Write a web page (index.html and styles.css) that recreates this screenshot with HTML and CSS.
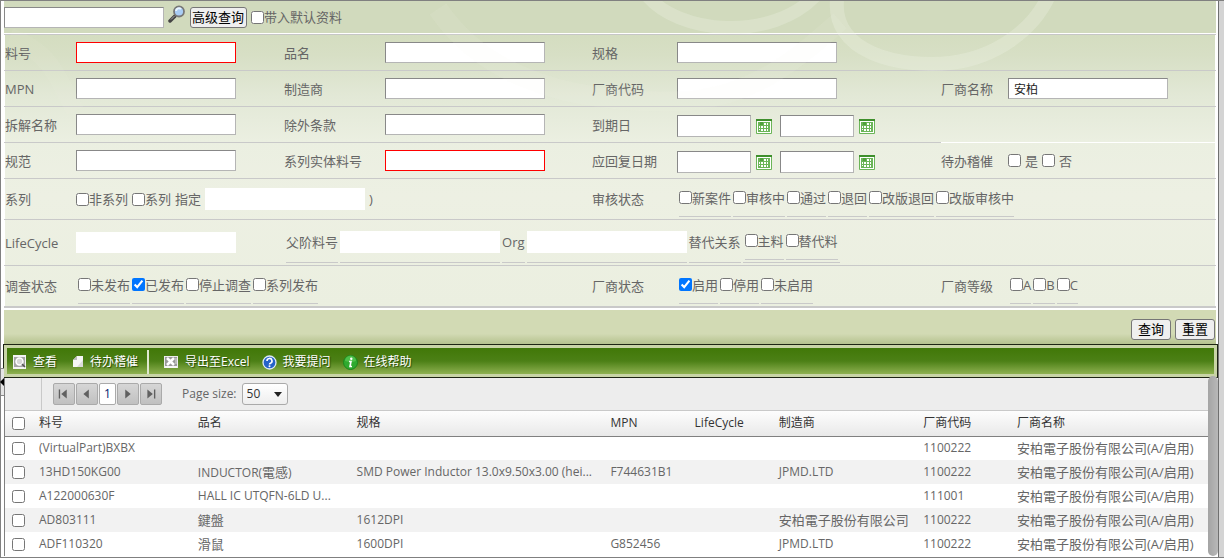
FILE: index.html
```html
<!DOCTYPE html>
<html lang="zh-CN">
<head>
<meta charset="utf-8">
<title>料号查询</title>
<link rel="stylesheet" href="styles.css">
</head>
<body>
<svg class="defs" width="0" height="0" aria-hidden="true">
  <symbol id="cal" viewBox="0 0 16 15">
    <rect x="0" y="0" width="16" height="15" rx="1" fill="#6bb558"/>
    <rect x="0" y="0" width="16" height="2" fill="#3e8f2c"/>
    <rect x="1" y="2" width="14" height="12" fill="#fff"/>
    <rect x="2" y="3" width="12" height="10" fill="#6bb558"/>
    <path d="M5 4h2v2H5zM8 4h2v2H8zM11 4h1v2h-1zM3 7h1v2H3zM5 7h2v2H5zM8 7h2v2H8zM11 7h1v2h-1zM3 10h1v1H3zM5 10h2v2H5zM8 10h2v2H8zM11 10h1v2h-1z" fill="#fff"/>
    <path d="M4 3h3v3H4z" fill="#4fa13c"/>
  </symbol>
</svg>
<div class="frame">
  <main class="page">
    <svg class="swirl" viewBox="0 0 1212 178" preserveAspectRatio="xMidYMin slice" aria-hidden="true">
      <g fill="none" stroke="#f2f7ea">
        <path d="M641 -8C672 34 770 42 814 -8" stroke-width="13" opacity=".26"/>
        <path d="M834 -8C822 54 900 67 946 62C990 57 1030 30 1046 -8" stroke-width="14" opacity=".26"/>
        <path d="M434 8C476 70 556 105 686 100C756 92 796 55 836 20" stroke-width="20" opacity=".1"/>
        <path d="M6 36C46 50 56 80 71 110" stroke-width="18" opacity=".08"/>
      </g>
    </svg>
    <form class="search">
      <div class="quick">
        <input class="box" type="text" aria-label="快速查询">
        <button class="lens" type="button" aria-label="查询">
          <svg width="18" height="18" viewBox="0 0 18 18"><path d="M7 11L2 16" stroke="#444" stroke-width="3.500" stroke-linecap="round"/><path d="M6.500 11L3 14.500" stroke="#aaa" stroke-width="1"/><circle cx="11" cy="6.500" r="5" fill="#a9cdf5" stroke="#777" stroke-width="1.800"/><path d="M8 6a3 3 0 0 1 5-2" stroke="#eaf4ff" stroke-width="2" fill="none"/></svg>
        </button>
        <button class="btn advanced" type="button">高级查询</button>
        <label class="check"><input type="checkbox">带入默认资料</label>
      </div>

      <div class="fields">
        <label class="cell name first" for="f1">料号</label><div class="cell"><input class="box req" id="f1" type="text"></div>
        <label class="cell name" for="f2">品名</label><div class="cell"><input class="box" id="f2" type="text"></div>
        <label class="cell name" for="f3">规格</label><div class="cell"><input class="box" id="f3" type="text"></div>
        <div class="cell rest"></div>

        <label class="cell name first" for="f4">MPN</label><div class="cell"><input class="box" id="f4" type="text"></div>
        <label class="cell name" for="f5">制造商</label><div class="cell"><input class="box" id="f5" type="text"></div>
        <label class="cell name" for="f6">厂商代码</label><div class="cell"><input class="box" id="f6" type="text"></div>
        <label class="cell name" for="f7">厂商名称</label><div class="cell"><input class="box" id="f7" type="text" value="安柏"></div>

        <label class="cell name first" for="f8">拆解名称</label><div class="cell"><input class="box" id="f8" type="text"></div>
        <label class="cell name" for="f9">除外条款</label><div class="cell"><input class="box" id="f9" type="text"></div>
        <label class="cell name" for="f10">到期日</label>
        <div class="cell dates">
          <input class="box date" id="f10" type="text"><button class="cal" type="button" aria-label="选择日期"><svg><use href="#cal"/></svg></button>
          <input class="box date" type="text" aria-label="到期日至"><button class="cal" type="button" aria-label="选择日期"><svg><use href="#cal"/></svg></button>
        </div>
        <div class="cell rest pale"></div>

        <label class="cell name first" for="f11">规范</label><div class="cell"><input class="box" id="f11" type="text"></div>
        <label class="cell name" for="f12">系列实体料号</label><div class="cell"><input class="box req" id="f12" type="text"></div>
        <label class="cell name" for="f13">应回复日期</label>
        <div class="cell dates">
          <input class="box date" id="f13" type="text"><button class="cal" type="button" aria-label="选择日期"><svg><use href="#cal"/></svg></button>
          <input class="box date" type="text" aria-label="应回复日期至"><button class="cal" type="button" aria-label="选择日期"><svg><use href="#cal"/></svg></button>
        </div>
        <div class="cell name">待办稽催</div>
        <div class="cell yesno"><label class="check"><input type="checkbox">是</label><label class="check"><input type="checkbox">否</label></div>

        <div class="cell name first r5">系列</div>
        <div class="cell span3 series">
          <label class="check"><input type="checkbox">非系列</label><label class="check"><input type="checkbox">系列</label>
          <label for="f14">指定</label><input class="box plain" id="f14" type="text"><span>)</span>
        </div>
        <div class="cell name">审核状态</div>
        <div class="cell span3 lined">
          <label class="check"><input type="checkbox">新案件</label><label class="check"><input type="checkbox">审核中</label><label class="check"><input type="checkbox">通过</label><label class="check"><input type="checkbox">退回</label><label class="check"><input type="checkbox">改版退回</label><label class="check"><input type="checkbox">改版审核中</label>
        </div>

        <label class="cell name first r6" for="f15">LifeCycle</label><div class="cell"><input class="box bare" id="f15" type="text"></div>
        <div class="cell span6 parts">
          <label class="part" for="f16">父阶料号</label>
          <div class="part"><input class="box plain" id="f16" type="text"></div>
          <label class="part" for="f17">Org</label>
          <div class="part"><input class="box plain" id="f17" type="text"></div>
          <span class="part">替代关系</span>
          <div class="part lined"><label class="check"><input type="checkbox">主料</label><label class="check"><input type="checkbox">替代料</label></div>
        </div>

        <div class="cell name first r7">调查状态</div>
        <div class="cell lined r7">
          <label class="check"><input type="checkbox">未发布</label><label class="check"><input type="checkbox" checked>已发布</label><label class="check"><input type="checkbox">停止调查</label><label class="check"><input type="checkbox">系列发布</label>
        </div>
        <div class="cell r7"></div><div class="cell r7"></div>
        <div class="cell name r7">厂商状态</div>
        <div class="cell lined r7">
          <label class="check"><input type="checkbox" checked>启用</label><label class="check"><input type="checkbox">停用</label><label class="check"><input type="checkbox">未启用</label>
        </div>
        <div class="cell name r7">厂商等级</div>
        <div class="cell lined r7">
          <label class="check"><input type="checkbox">A</label><label class="check"><input type="checkbox">B</label><label class="check"><input type="checkbox">C</label>
        </div>
      </div>

      <div class="actions"><button class="btn" type="submit">查询</button><button class="btn" type="reset">重置</button></div>
    </form>

    <nav class="toolbar">
      <button type="button" class="tool"><svg width="14" height="14" viewBox="0 0 14 14"><rect width="13" height="14" fill="#f4f4f4"/><rect x="1" y="2" width="11" height="10" fill="#a5a5a5"/><circle cx="6.500" cy="6.500" r="3.500" fill="#d8d8d8" stroke="#fff" stroke-width="1.500"/><path d="M9 9l3 3" stroke="#555" stroke-width="1.500"/></svg>查看</button>
      <button type="button" class="tool"><svg width="12" height="14" viewBox="0 0 12 14"><path d="M1 5L5 1h6v11H1z" fill="#f6f6f6"/><path d="M1 5h4V1z" fill="#bcbcbc"/><path d="M5 12l6-7v7z" fill="#dcdcdc"/></svg>待办稽催</button>
      <span class="bar"></span>
      <button type="button" class="tool"><svg width="15" height="14" viewBox="0 0 15 14"><path d="M0 1h14v12H0z" fill="#ededed"/><path d="M1 2h12v9H1z" fill="#999"/><path d="M3 3l7 7M10 3L3 10" stroke="#fff" stroke-width="2.500"/><path d="M11 4h2M11 6h2M11 8h2" stroke="#ddd"/><path d="M1 12h12" stroke="#fff"/></svg>导出至Excel</button>
      <button type="button" class="tool"><svg width="15" height="15" viewBox="0 0 15 15"><circle cx="7.500" cy="7.500" r="6.500" fill="#2563c9" stroke="#dce8f8" stroke-width="1.300"/><path d="M5 6a2.500 2.500 0 1 1 3.500 2.200q-1 .4-1 1.300" fill="none" stroke="#fff" stroke-width="1.600"/><circle cx="7.500" cy="11.300" r="1" fill="#fff"/></svg>我要提问</button>
      <button type="button" class="tool"><svg width="15" height="15" viewBox="0 0 15 15"><circle cx="7.500" cy="7.500" r="7" fill="#2faa2f" stroke="#1d861d"/><path d="M2 6a5.500 5.500 0 0 1 11 0q-5 2-11 0" fill="#62cf5e" opacity=".6"/><circle cx="8.300" cy="3.700" r="1.200" fill="#fff"/><path d="M6 6.500h2l-1 5h2" fill="none" stroke="#fff" stroke-width="1.600"/></svg>在线帮助</button>
    </nav>

    <section class="grid">
      <div class="list">
        <div class="pager">
          <div class="pages">
            <button type="button" aria-label="第一页"><svg viewBox="0 0 22 22"><path d="M6 6v10" stroke="#606060" stroke-width="1.500"/><path d="M14 6v10l-6-5z" fill="#606060"/></svg></button>
            <button type="button" aria-label="上一页"><svg viewBox="0 0 22 22"><path d="M13 6v10l-6-5z" fill="#606060"/></svg></button>
            <button type="button" class="current">1</button>
            <button type="button" aria-label="下一页"><svg viewBox="0 0 22 22"><path d="M8 6v10l6-5z" fill="#606060"/></svg></button>
            <button type="button" aria-label="最后一页"><svg viewBox="0 0 22 22"><path d="M15 6v10" stroke="#606060" stroke-width="1.500"/><path d="M7 6v10l6-5z" fill="#606060"/></svg></button>
          </div>
          <label for="size">Page size:</label>
          <select id="size"><option>50</option></select>
        </div>
        <table>
          <colgroup><col class="w-check"><col class="w-part"><col class="w-part"><col class="w-spec"><col class="w-mpn"><col class="w-mpn"><col class="w-maker"><col class="w-code"><col class="w-vendor"></colgroup>
          <thead><tr><th><input type="checkbox" aria-label="全选"></th><th>料号</th><th>品名</th><th>规格</th><th>MPN</th><th>LifeCycle</th><th>制造商</th><th>厂商代码</th><th>厂商名称</th></tr></thead>
          <tbody>
            <tr><td><input type="checkbox" aria-label="选择"></td><td>(VirtualPart)BXBX</td><td></td><td></td><td></td><td></td><td></td><td>1100222</td><td class="zh">安柏電子股份有限公司(A/启用)</td></tr>
            <tr><td><input type="checkbox" aria-label="选择"></td><td>13HD150KG00</td><td>INDUCTOR(<span class="zh">電感</span>)</td><td>SMD Power Inductor 13.0x9.50x3.00 (hei...</td><td>F744631B1</td><td></td><td>JPMD.LTD</td><td>1100222</td><td class="zh">安柏電子股份有限公司(A/启用)</td></tr>
            <tr><td><input type="checkbox" aria-label="选择"></td><td>A122000630F</td><td>HALL IC UTQFN-6LD U...</td><td></td><td></td><td></td><td></td><td>111001</td><td class="zh">安柏電子股份有限公司(A/启用)</td></tr>
            <tr><td><input type="checkbox" aria-label="选择"></td><td>AD803111</td><td class="zh">鍵盤</td><td>1612DPI</td><td></td><td></td><td class="zh">安柏電子股份有限公司</td><td>1100222</td><td class="zh">安柏電子股份有限公司(A/启用)</td></tr>
            <tr><td><input type="checkbox" aria-label="选择"></td><td>ADF110320</td><td class="zh">滑鼠</td><td>1600DPI</td><td>G852456</td><td></td><td>JPMD.LTD</td><td>1100222</td><td class="zh">安柏電子股份有限公司(A/启用)</td></tr>
          </tbody>
        </table>
      </div>
      <div class="scroll"></div>
    </section>
    <div class="splitter"></div>
  </main>
</div>
</body>
</html>
```

FILE: styles.css
```css
* { box-sizing: border-box; }
body {
  margin: 0;
  background: #fff;
  color: #666;
  font: 13px/18px "Open Sans", "Noto Sans CJK SC", sans-serif;
}
input, button, select { font: inherit; margin: 0; }
input[type="checkbox"] { width: 13px; height: 13px; margin: 0; flex: none; }
button { cursor: pointer; }
.defs { position: absolute; }

.frame {
  min-height: 100vh;
  border: 1px solid #808080;
  border-right: 0;
  padding-right: 5px;
  background: #d4d4d4;
}
.page {
  position: relative;
  min-height: calc(100vh - 2px);
  padding: 0 2px 0 3px;
  border-right: 1px solid #707070;
  background: #fff;
}
.swirl {
  position: absolute;
  top: 0;
  left: 3px;
  width: calc(100% - 5px);
  height: 178px;
  pointer-events: none;
}

.quick {
  display: flex;
  align-items: center;
  height: 32px;
  background: #d1dabd;
}
.lens { margin: 0 4px; padding: 0; border: 0; background: none; display: flex; height: 24px; }
.check { display: flex; align-items: center; white-space: nowrap; }
.quick .check { margin-left: 4px; }
.box {
  width: 160px;
  height: 21px;
  padding: 0 5px;
  border: 1px solid #b5b5b5;
  border-top-color: #888;
  border-left-color: #888;
  border-radius: 0;
  background: #fff;
  color: #222;
  font-size: 12px;
}
.box:focus { outline: none; }
.box.req { border-color: red; }
.box.plain { height: 22px; border: 0; }
.box.bare { border: 0; }
.box.date { width: 74px; height: 22px; }
.btn {
  height: 21px;
  padding: 0 6px;
  border: 1px solid #767676;
  border-radius: 3px;
  background: #efefef;
  color: #000;
  line-height: 18px;
}
.advanced { padding: 0 2px 0 1px; }

.fields {
  display: grid;
  grid-template-columns: 72px 208fr 101px 207fr 85px 264fr 67px 208fr;
  border-top: 1px solid #c6c6c6;
  box-shadow: 0 -1px #fff;
  margin-top: 1px;
  background: linear-gradient(#d4ddc0, #d7dfc5 20px, #e2e8d6 60px, #ebefe1 106px, #edf0e3 160px, #ebefe0) center / calc(100% - 2px) 100% no-repeat #fff;
}
.cell {
  display: flex;
  align-items: center;
  min-width: 0;
  min-height: 36px;
  border-bottom: 1px solid #c9c9c9;
  white-space: nowrap;
}
.first { padding-left: 1px; }
.rest { grid-column: span 2; }
.pale { border-color: #fff; }
.span3 { grid-column: span 3; }
.span6 { grid-column: span 6; }
.r5 { min-height: 41px; }
.r6 { min-height: 46px; }
.r7 { min-height: 42px; border-bottom-width: 2px; }
.dates .cal { margin: 3px 8px 0 5px; }
.dates .box { margin-top: 3px; }
.cal { display: flex; padding: 0; border: 0; background: none; }
.cal svg { width: 16px; height: 15px; }
.yesno { gap: 4px; }
.yesno .check { gap: 4px; }
.series { gap: 4px; }
.lined { gap: 2px; padding-left: 2px; }
.lined .check { height: 36px; padding-bottom: 2px; border-bottom: 1px solid #c9c9c9; }
.parts { gap: 2px; padding-left: 2px; }
.part { display: flex; align-items: center; height: 41px; border-bottom: 1px solid #c9c9c9; }
.part.lined { align-items: flex-start; padding-top: 2px; padding-right: 2px; }

.actions {
  display: flex;
  justify-content: flex-end;
  align-items: center;
  gap: 4px;
  height: 36px;
  margin-top: 2px;
  padding: 4px 1px 0 0;
  border-bottom: 2px solid #d3dcb9;
  background: linear-gradient(#d2dab4 70%, #b5c28e);
}

.toolbar {
  position: relative;
  display: flex;
  align-items: center;
  height: 34px;
  margin: -2px -2px 0 -1px;
  padding: 2px 6px 0;
  border: 1px solid #1d2413;
  box-shadow: inset 0 0 0 3px #c8d4a6;
  background: linear-gradient(#417808 10%, #4c8016 50%, #8db04f 90%);
}
.tool {
  display: flex;
  align-items: center;
  gap: 6px;
  margin-right: 12px;
  padding: 0;
  border: 0;
  background: none;
  color: #fff;
  font-size: 12px;
  text-shadow: 1px 1px 1px #264806;
  white-space: nowrap;
}
.tool:first-child { margin: 0 15px 0 3px; }
.bar { width: 2px; height: 24px; margin: 0 15px 0 -3px; background: #dfe8cf; }

.grid { display: flex; margin-right: -2px; border-left: 1px solid #808080; }
.list { flex: 1; min-width: 0; }
.scroll { width: 10px; margin-top: -2px; border-radius: 5px; background: linear-gradient(90deg, #a4a4a4, #b8b8b8); z-index: 1; }
.pager {
  display: flex;
  align-items: center;
  height: 33px;
  border-bottom: 1px solid #c9c9c9;
  background: #ededed;
}
.pages {
  display: flex;
  align-items: center;
  gap: 1px;
  height: 100%;
  margin-left: 36px;
  padding-left: 11px;
  border-left: 1px solid #c9c9c9;
}
.pages button {
  display: flex;
  width: 22px;
  height: 22px;
  padding: 0;
  border: 1px solid #aaa;
  border-radius: 2px;
  background: linear-gradient(#d6d6d6, #c0c0c0);
}
.pages .current { width: 17px; justify-content: center; align-items: center; background: #fff; color: #00156e; font-size: 12px; }
.pager label { margin: 0 5px 0 20px; font-size: 12px; }
.pager select {
  width: 46px;
  height: 22px;
  padding: 0 4px;
  border: 1px solid #aaa;
  border-radius: 3px;
  color: #333;
  font-size: 12px;
  appearance: none;
  background: url("data:image/svg+xml,%3Csvg xmlns='http://www.w3.org/2000/svg' width='8' height='5'%3E%3Cpath d='M0 0h8L4 5z' fill='%23222'/%3E%3C/svg%3E") right 5px center no-repeat, linear-gradient(#fff, #eee);
}

table { width: 100%; border-collapse: collapse; table-layout: fixed; font-size: 12px; }
.w-check { width: 29px; }
.w-part { width: 13.2%; }
.w-spec { width: 21.1%; }
.w-mpn { width: 7%; }
.w-maker { width: 12%; }
.w-code { width: 7.8%; }
th, td { height: 24px; padding: 0 5px; text-align: left; font-weight: 400; white-space: nowrap; overflow: hidden; text-overflow: ellipsis; }
th { height: 25px; color: #333; border-bottom: 1px solid #808080; }
thead tr { background: linear-gradient(#fdfdfd, #e9e9e9); }
th:first-child, td:first-child { padding: 0 0 0 7px; }
th input, td input { display: block; }
tbody tr:nth-child(even) { background: #f2f2f2; }
.zh { font-size: 13px; }

.splitter {
  position: absolute;
  left: 0;
  top: 367px;
  width: 3px;
  height: 28px;
  border-top: 1px solid #888;
  border-bottom: 1px solid #888;
  background: #e4e4e4;
}
.splitter::before {
  content: "";
  position: absolute;
  top: 9px;
  left: -1px;
  border: 4px solid transparent;
  border-right-color: #000;
  border-left: 0;
}
```
